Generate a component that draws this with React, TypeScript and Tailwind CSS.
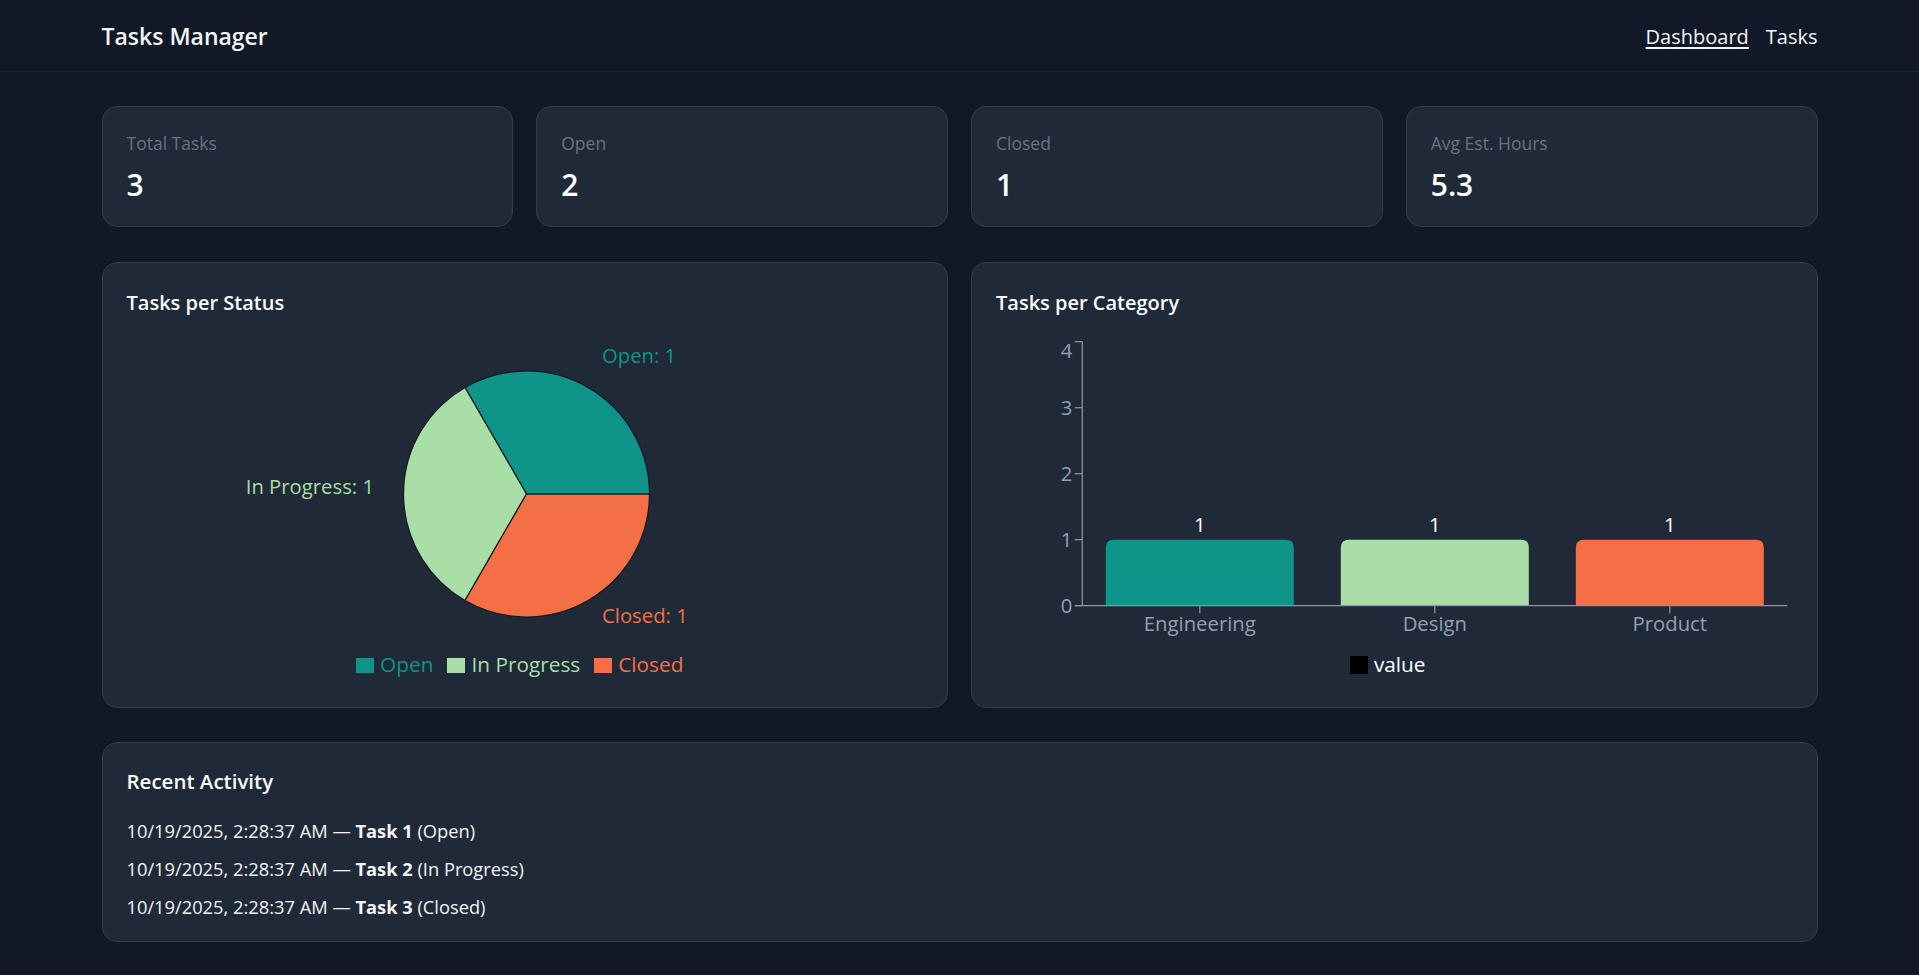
import React from "react";

const TEAL = "#0e9488";
const GREEN = "#a9dea6";
const ORANGE = "#f46f45";

function StatCard({ label, value }: { label: string; value: string }) {
  return (
    <div className="h-[121px] rounded-[15px] border border-[#323c4b] bg-[#1f2937] px-6 pt-6">
      <div className="text-[17.5px] leading-[25px] text-[#6b7280]">{label}</div>
      <div className="mt-[10px] text-[30px] font-semibold leading-[38px] text-white">{value}</div>
    </div>
  );
}

function PieChart() {
  const cx = 399.5;
  const cy = 160;
  const r = 123;
  const p0 = `${cx + r},${cy}`;
  const p1 = `${cx - r / 2},${cy - r * 0.866}`;
  const p2 = `${cx - r / 2},${cy + r * 0.866}`;
  return (
    <svg width="799" height="318" className="mt-[15px] block">
      <path d={`M${cx},${cy} L${p0} A${r},${r} 0 0 0 ${p1} Z`} fill={TEAL} stroke="#141a24" strokeWidth="1.25" />
      <path d={`M${cx},${cy} L${p1} A${r},${r} 0 0 0 ${p2} Z`} fill={GREEN} stroke="#141a24" strokeWidth="1.25" />
      <path d={`M${cx},${cy} L${p2} A${r},${r} 0 0 0 ${p0} Z`} fill={ORANGE} stroke="#141a24" strokeWidth="1.25" />
      <text x="475" y="21" fill={TEAL} fontSize="20.3" dominantBaseline="central" textAnchor="start">Open: 1</text>
      <text x="247" y="152" fill={GREEN} fontSize="20.3" dominantBaseline="central" textAnchor="end">In Progress: 1</text>
      <text x="475" y="281" fill={ORANGE} fontSize="20.3" dominantBaseline="central" textAnchor="start">Closed: 1</text>
    </svg>
  );
}

function BarChart() {
  const axisX = 86.3;
  const y0 = 271.7;
  const step = 66;
  const right = 791.3;
  const band = (right - axisX) / 3;
  const bars = [
    { name: "Engineering", color: TEAL },
    { name: "Design", color: GREEN },
    { name: "Product", color: ORANGE },
  ];
  const barW = 188;
  const top = y0 - step;
  const rad = 8;
  return (
    <svg width="797" height="318" className="mt-[15px] block">
      {[0, 1, 2, 3, 4].map((v) => (
        <g key={v}>
          <line x1={axisX - 7.5} x2={axisX} y1={y0 - v * step} y2={y0 - v * step} stroke="#8b95a5" strokeWidth="1.25" />
          <text
            x={axisX - 10}
            y={v === 4 ? 16 : y0 - v * step - 1}
            fill="#94a0b2"
            fontSize="20.3"
            textAnchor="end"
            dominantBaseline="central"
          >
            {v}
          </text>
        </g>
      ))}
      {bars.map((b, i) => {
        const c = axisX + band * i + band / 2;
        const x = c - barW / 2;
        return (
          <g key={b.name}>
            <path
              d={`M${x},${y0} L${x},${top + rad} Q${x},${top} ${x + rad},${top} L${x + barW - rad},${top} Q${x + barW},${top} ${x + barW},${top + rad} L${x + barW},${y0} Z`}
              fill={b.color}
            />
            <text x={c} y="189.5" fill="#ffffff" fontSize="20.3" textAnchor="middle" dominantBaseline="central">
              1
            </text>
            <line x1={c} x2={c} y1={y0} y2={y0 + 7.5} stroke="#8b95a5" strokeWidth="1.25" />
            <text x={c} y="289" fill="#94a0b2" fontSize="20.3" textAnchor="middle" dominantBaseline="central">
              {b.name}
            </text>
          </g>
        );
      })}
      <line x1={axisX} x2={axisX} y1={y0 - 4 * step} y2={y0} stroke="#8b95a5" strokeWidth="1.25" />
      <line x1={axisX - 7.5} x2={right} y1={y0} y2={y0} stroke="#8b95a5" strokeWidth="1.25" />
    </svg>
  );
}

export default function App() {
  return (
    <div
      className="min-h-[975px] bg-[#111827] text-white"
      style={{ fontFamily: '"Open Sans", "Noto Sans", sans-serif' }}
    >
      <header className="h-[72px] border-b border-[#1c2533]">
        <div className="mx-auto flex h-[71px] max-w-[1716px] items-center justify-between pt-[2px]">
          <div className="text-[23px] font-semibold text-[#f3f4f6]">Tasks Manager</div>
          <nav className="flex items-center gap-[17px] text-[20px] text-[#f3f4f6]">
            <a className="underline underline-offset-[3px] decoration-[2px]">Dashboard</a>
            <a>Tasks</a>
          </nav>
        </div>
      </header>

      <main className="mx-auto flex max-w-[1716px] flex-col pt-[34px] pb-[34px]">
        <div className="grid grid-cols-4 gap-[23px]">
          <StatCard label="Total Tasks" value="3" />
          <StatCard label="Open" value="2" />
          <StatCard label="Closed" value="1" />
          <StatCard label="Avg Est. Hours" value="5.3" />
        </div>

        <div className="mt-[35px] grid grid-cols-2 gap-[23px]">
          <div className="h-[446px] rounded-[15px] border border-[#323c4b] bg-[#1f2937] px-6 pt-6">
            <div className="text-[20px] font-semibold leading-[32px] text-[#f9fafb]">Tasks per Status</div>
            <PieChart />
            <div className="flex h-[26px] items-center justify-center pr-[10px] text-[20.8px]">
              <div className="flex items-center">
                <span className="mr-[6px] inline-block h-[15px] w-[18px] bg-[#0e9488]" />
                <span className="text-[#0e9488]">Open</span>
              </div>
              <div className="ml-[14px] flex items-center">
                <span className="mr-[6px] inline-block h-[15px] w-[18px] bg-[#a9dea6]" />
                <span className="text-[#a9dea6]">In Progress</span>
              </div>
              <div className="ml-[14px] flex items-center">
                <span className="mr-[6px] inline-block h-[15px] w-[18px] bg-[#f46f45]" />
                <span className="text-[#f46f45]">Closed</span>
              </div>
            </div>
          </div>

          <div className="h-[446px] rounded-[15px] border border-[#323c4b] bg-[#1f2937] px-6 pt-6">
            <div className="text-[20px] font-semibold leading-[32px] text-[#f9fafb]">Tasks per Category</div>
            <BarChart />
            <div className="flex h-[26px] items-center justify-center pr-[13px] text-[20.8px]">
              <span className="mr-[6px] inline-block h-[18px] w-[18px] bg-black" />
              <span className="text-white">value</span>
            </div>
          </div>
        </div>

        <div className="mt-[34px] rounded-[15px] border border-[#323c4b] bg-[#1f2937] px-6 pt-[22px] pb-[22px]">
          <div className="text-[20.5px] font-semibold leading-[32px] text-[#f9fafb]">Recent Activity</div>
          <ul className="mt-[21px] flex flex-col gap-[13px] text-[18.3px] leading-[25px] text-[#f3f4f6]">
            <li>
              10/19/2025, 2:28:37 AM — <b>Task 1</b> (Open)
            </li>
            <li>
              10/19/2025, 2:28:37 AM — <b>Task 2</b> (In Progress)
            </li>
            <li>
              10/19/2025, 2:28:37 AM — <b>Task 3</b> (Closed)
            </li>
          </ul>
        </div>
      </main>
    </div>
  );
}
